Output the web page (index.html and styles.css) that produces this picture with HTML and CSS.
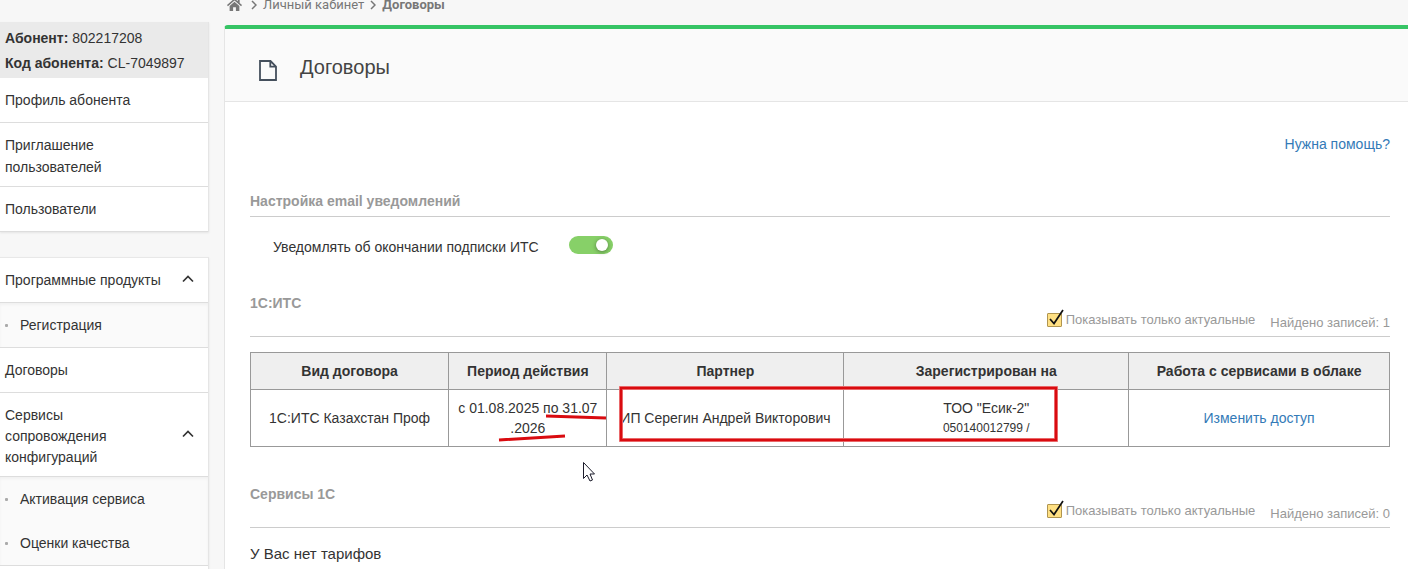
FILE: index.html
```html
<!DOCTYPE html>
<html lang="ru">
<head>
  <meta charset="UTF-8">
  <meta name="viewport" content="width=device-width, initial-scale=1.0">
  <title>Договоры</title>
  <link rel="stylesheet" href="styles.css">
</head>
<body>
  <div class="page">
    <aside class="sidebar">
      <div class="menu">
        <div class="account">
          <div><b>Абонент:</b> 802217208</div>
          <div><b>Код абонента:</b> CL-7049897</div>
        </div>
        <a href="#" class="menu-item">Профиль абонента</a>
        <a href="#" class="menu-item">Приглашение<br>пользователей</a>
        <a href="#" class="menu-item">Пользователи</a>
      </div>

      <nav class="menu menu-nav">
        <button type="button" class="menu-item menu-toggle">
          Программные продукты
          <svg class="chevron" width="12" height="8" viewBox="0 0 12 8"><path d="M1 6.500 6 1.500l5 5"/></svg>
        </button>
        <div class="submenu">
          <a href="#" class="submenu-item">Регистрация</a>
        </div>
        <a href="#" class="menu-item">Договоры</a>
        <button type="button" class="menu-item menu-item-long">
          Сервисы<br>сопровождения<br>конфигураций
          <svg class="chevron" width="12" height="8" viewBox="0 0 12 8"><path d="M1 6.500 6 1.500l5 5"/></svg>
        </button>
        <div class="submenu">
          <a href="#" class="submenu-item">Активация сервиса</a>
          <a href="#" class="submenu-item">Оценки качества</a>
        </div>
      </nav>
    </aside>

    <main class="main">
      <div class="breadcrumbs">
        <a href="#" class="home" aria-label="Главная">
          <svg width="15" height="14" viewBox="0 0 16 14"><path fill="#777" d="M8 0 0 7l1 1.200L8 2.200l7 6L16 7l-2.500-2.200V1h-2v2zM2.800 8 8 3.600 13.200 8v5.500H9.500v-4h-3v4H2.800z"/></svg>
        </a>
        <svg class="sep" width="6" height="10" viewBox="0 0 6 10"><path d="M1 1l4 4-4 4"/></svg>
        <a href="#">Личный кабинет</a>
        <svg class="sep" width="6" height="10" viewBox="0 0 6 10"><path d="M1 1l4 4-4 4"/></svg>
        <b>Договоры</b>
      </div>

      <div class="panel">
        <header class="panel-header">
          <svg width="18" height="21" viewBox="0 0 18 21"><path fill="none" stroke="#444f5c" stroke-width="1.800" d="M1 1h10.500L17 6.500V20H1zM11.300 1v5.700H17"/></svg>
          <h1>Договоры</h1>
        </header>

        <div class="panel-body">
          <a href="#" class="link help">Нужна помощь?</a>

          <section>
            <h2 class="section-head">Настройка email уведомлений</h2>
            <div class="setting">
              <label for="notify">Уведомлять об окончании подписки ИТС</label>
              <input type="checkbox" id="notify" class="switch" checked>
            </div>
          </section>

          <section>
            <div class="section-head list-head">
              <h2>1С:ИТС</h2>
              <div class="filter">
                <label class="actual">
                  <span class="tick">
                    <input type="checkbox" checked>
                    <svg width="17" height="18" viewBox="0 0 17 18"><path d="M3 10l4 4.500L16 1"/></svg>
                  </span>
                  Показывать только актуальные
                </label>
                <span class="count">Найдено записей: 1</span>
              </div>
            </div>

            <div class="contracts">
              <table>
                <colgroup>
                  <col class="col-type">
                  <col class="col-period">
                  <col class="col-partner">
                  <col class="col-owner">
                  <col class="col-cloud">
                </colgroup>
                <thead>
                  <tr>
                    <th>Вид договора</th>
                    <th>Период действия</th>
                    <th>Партнер</th>
                    <th>Зарегистрирован на</th>
                    <th>Работа с сервисами в облаке</th>
                  </tr>
                </thead>
                <tbody>
                  <tr>
                    <td>1С:ИТС Казахстан Проф</td>
                    <td>с 01.08.2025 по 31.07<br>.2026</td>
                    <td>ИП Серегин Андрей Викторович</td>
                    <td>ТОО "Есик-2"<br><small>050140012799 /</small></td>
                    <td><a href="#" class="link">Изменить доступ</a></td>
                  </tr>
                </tbody>
              </table>
              <!-- red marks over the table and the pointer below it -->
              <svg class="marks" width="820" height="140" viewBox="0 0 820 140">
                <g fill="none" stroke="#d90b10" stroke-width="3">
                  <path d="M296 64l60 2M249 88l66-4"/>
                  <path stroke="#e88" stroke-width="4" d="M371 36h435v52H371z"/>
                  <path stroke-width="2.500" d="M371 36h435v52H371z"/>
                </g>
                <path fill="#fff" stroke="#1b1b2a" d="M333.500 110.500v16l3.500-3.500 3 6 2.500-1-2.500-6h4.500z"/>
              </svg>
            </div>
          </section>

          <section>
            <div class="section-head list-head">
              <h2>Сервисы 1С</h2>
              <div class="filter">
                <label class="actual">
                  <span class="tick">
                    <input type="checkbox" checked>
                    <svg width="17" height="18" viewBox="0 0 17 18"><path d="M3 10l4 4.500L16 1"/></svg>
                  </span>
                  Показывать только актуальные
                </label>
                <span class="count">Найдено записей: 0</span>
              </div>
            </div>
            <p class="empty">У Вас нет тарифов</p>
          </section>
        </div>
      </div>
    </main>
  </div>
</body>
</html>
```
FILE: styles.css
```css
* {
  margin: 0;
  padding: 0;
  box-sizing: border-box;
}

body {
  font-family: "Liberation Sans", Arial, sans-serif;
  font-size: 14px;
  line-height: 20px;
  color: #333;
  background-color: #f7f7f7;
  height: 100vh;
  overflow: hidden;
}

a {
  color: inherit;
  text-decoration: none;
}

.link {
  color: #337ab7;
}

.page {
  display: grid;
  grid-template-columns: 209px 1fr;
  gap: 15px;
  height: 100vh;
  overflow: hidden;
}

/* sidebar */
.sidebar {
  padding-top: 22px;
}

.menu {
  margin-bottom: 25px;
  background-color: #fff;
  border-right: 1px solid #e5e5e5;
  box-shadow: 0 1px 2px rgba(0, 0, 0, 0.08);
}

.menu-nav {
  border-top: 1px solid #e8e8e8;
  padding-bottom: 45px;
}

.account {
  padding: 4px 5px 2px;
  line-height: 25px;
  background-color: #eaeaea;
}

.menu-item {
  display: block;
  position: relative;
  width: 100%;
  min-height: 45px;
  padding: 11px 5px 8px;
  border: 0;
  border-bottom: 1px solid #ddd;
  background-color: #fff;
  color: #333;
  font: inherit;
  line-height: 22px;
  text-align: left;
}

.menu-toggle {
  padding: 9px 5px 10px;
}

.menu-item-long {
  padding-top: 12px;
  line-height: 21px;
}

.chevron {
  position: absolute;
  right: 14px;
  top: calc(50% - 5px);
  fill: none;
  stroke: #333;
  stroke-width: 1.7;
}

.submenu {
  background-color: #fafafa;
  border-bottom: 1px solid #ddd;
  box-shadow: inset 0 2px 3px rgba(0, 0, 0, 0.04);
}

.submenu-item {
  display: flex;
  align-items: center;
  gap: 12px;
  height: 44px;
  padding-left: 5px;
}

.submenu-item::before {
  content: "";
  width: 3px;
  height: 3px;
  border-radius: 1px;
  background-color: #aaa;
}

/* main */
.breadcrumbs {
  display: flex;
  align-items: center;
  gap: 6px;
  height: 20px;
  margin-top: -5px;
  margin-bottom: 10px;
  padding-left: 3px;
  font-family: Roboto, sans-serif;
  font-size: 13px;
  color: #777;
}

.breadcrumbs a {
  display: flex;
}

.breadcrumbs .home {
  margin-right: 3px;
}

.sep {
  fill: none;
  stroke: #777;
  stroke-width: 1.5;
}

.panel {
  min-height: 100vh;
  background-color: #fff;
  border-left: 1px solid #e5e5e5;
  border-top: 4px solid #36c465;
  border-top-left-radius: 4px;
}

.panel-header {
  display: flex;
  align-items: center;
  gap: 23px;
  height: 73px;
  padding: 4px 34px 0;
  background-color: #fafafa;
  border-bottom: 1px solid #e5e5e5;
}

.panel-header svg {
  margin-top: 6px;
}

.panel-header h1 {
  font-size: 20px;
  font-weight: normal;
  color: #444;
}

.panel-body {
  padding: 32px 18px 0 25px;
}

.help {
  display: block;
  text-align: right;
}

.section-head {
  padding-bottom: 5px;
  border-bottom: 1px solid #ccc;
  color: #999;
}

h2 {
  font-size: 14px;
  line-height: 20px;
}

h2.section-head {
  margin-top: 37px;
}

.setting {
  display: flex;
  align-items: center;
  gap: 30px;
  padding: 19px 0 0 23px;
  margin-bottom: 35px;
}

.switch {
  appearance: none;
  width: 44px;
  height: 18px;
  padding: 3px 5px;
  border-radius: 9px;
  background-color: #87d068;
  margin-bottom: 4px;
}

.switch::before {
  content: "";
  display: block;
  width: 12px;
  height: 12px;
  margin-left: auto;
  border-radius: 50%;
  background-color: #fff;
  box-shadow: 0 1px 4px rgba(0, 0, 0, 0.4);
}

.list-head {
  display: flex;
  justify-content: space-between;
  padding-bottom: 3px;
}

.filter {
  display: flex;
  align-items: flex-end;
  gap: 15px;
  padding-top: 17px;
  font-size: 13px;
}

.actual {
  display: flex;
  align-items: center;
  gap: 4px;
  padding-bottom: 3px;
}

.tick {
  display: flex;
  position: relative;
}

.tick input {
  appearance: none;
  width: 15px;
  height: 14px;
  border: 1px solid #b09550;
  border-radius: 1px;
  background-color: #ffe083;
}

.tick svg {
  position: absolute;
  left: 0;
  bottom: 0;
  fill: none;
  stroke: #111;
  stroke-width: 1.7;
}

.contracts {
  position: relative;
  margin: 15px 0 37px;
}

table {
  width: 100%;
  border-collapse: collapse;
  table-layout: fixed;
}

.col-type { width: 17.4%; }
.col-period { width: 13.9%; }
.col-partner { width: 20.8%; }
.col-owner { width: 25%; }
.col-cloud { width: 22.9%; }

th,
td {
  padding: 8px 4px;
  border: 1px solid #999;
  text-align: center;
}

th {
  background-color: #efefef;
}

small {
  font-size: 12px;
  vertical-align: top;
}

.marks {
  position: absolute;
  left: 0;
  top: 0;
  pointer-events: none;
}

.empty {
  padding-top: 16px;
  font-size: 15px;
}
```
